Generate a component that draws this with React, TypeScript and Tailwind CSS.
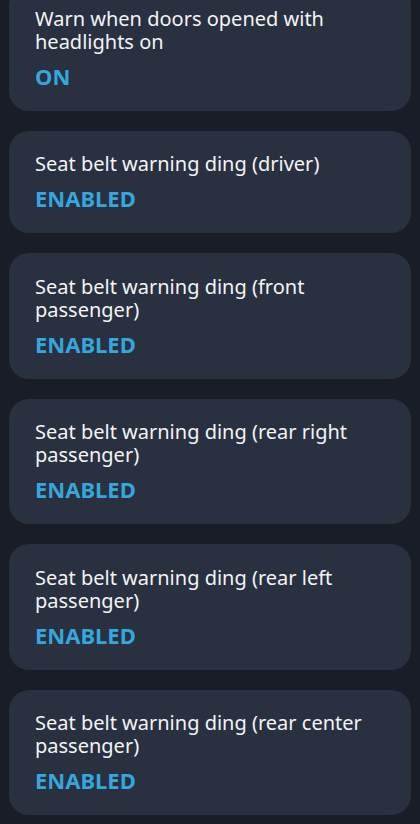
import React from 'react';

interface Setting {
  label: string;
  value: string;
}

const settings: Setting[] = [
  { label: 'Warn when doors opened with headlights on', value: 'ON' },
  { label: 'Seat belt warning ding (driver)', value: 'ENABLED' },
  { label: 'Seat belt warning ding (front passenger)', value: 'ENABLED' },
  { label: 'Seat belt warning ding (rear right passenger)', value: 'ENABLED' },
  { label: 'Seat belt warning ding (rear left passenger)', value: 'ENABLED' },
  { label: 'Seat belt warning ding (rear center passenger)', value: 'ENABLED' },
];

export default function App() {
  return (
    <div
      className="min-h-screen w-[420px] overflow-hidden bg-[#191d27]"
      style={{ fontFamily: '"Noto Sans", "Open Sans", sans-serif' }}
    >
      <div className="-mt-[15px] flex flex-col gap-[20px] px-[9px] pb-6">
        {settings.map((s) => (
          <div key={s.label} className="rounded-[20px] bg-[#293040] px-[26px] pt-[21.5px] pb-[22px]">
            <p className="text-[20px] leading-[23px] text-[#f3f4f6]">{s.label}</p>
            <p className="mt-[10px] text-[22px] font-bold leading-[26px] text-[#35a7dc]">{s.value}</p>
          </div>
        ))}
      </div>
    </div>
  );
}
